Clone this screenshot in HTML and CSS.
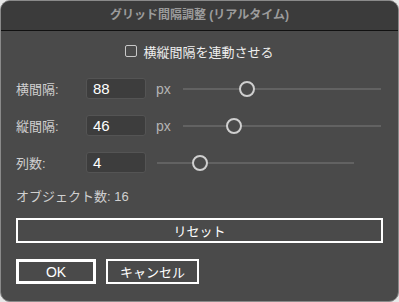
FILE: index.html
```html
<!DOCTYPE html>
<html>
<head>
    <link rel="stylesheet" href="styles.css">
</head>
<body>
    <div class="window">
        <div class="titlebar">グリッド間隔調整 (リアルタイム)</div>
        <div class="content">
            <label class="link-row">
                <span class="checkbox"></span>
                <span>横縦間隔を連動させる</span>
            </label>

            <div class="row">
                <span class="label">横間隔:</span>
                <div class="field">88</div>
                <span class="unit">px</span>
                <div class="slider wide"><span class="thumb" style="left: 32.3%"></span></div>
            </div>
            <div class="row">
                <span class="label">縦間隔:</span>
                <div class="field">46</div>
                <span class="unit">px</span>
                <div class="slider wide"><span class="thumb" style="left: 25.8%"></span></div>
            </div>
            <div class="row">
                <span class="label">列数:</span>
                <div class="field">4</div>
                <div class="slider short"><span class="thumb" style="left: 21.8%"></span></div>
            </div>

            <p class="count">オブジェクト数: 16</p>

            <button class="button reset">リセット</button>
            <div class="actions">
                <button class="button ok">OK</button>
                <button class="button cancel">キャンセル</button>
            </div>
        </div>
    </div>
</body>
</html>
```

FILE: styles.css
```css
body {
    margin: 0;
    background: #e8e8e8;
    font-family: "Liberation Sans", "Noto Sans CJK JP", sans-serif;
}
.window {
    width: 399px;
    height: 302px;
    box-sizing: border-box;
    border: 1px solid #8a8a8a;
    border-radius: 10px;
    background: #4a4a4a;
    overflow: hidden;
}
.titlebar {
    height: 29px;
    line-height: 29px;
    background: #3b3b3b;
    border-bottom: 1px solid #111;
    color: #9c9c9c;
    font-size: 12px;
    font-weight: bold;
    text-align: center;
}
.content {
    padding: 10px 15px 0 15px;
    display: flex;
    flex-direction: column;
}
.link-row {
    height: 20px;
    display: flex;
    align-items: center;
    justify-content: center;
    gap: 6px;
    color: #eeeeee;
    font-size: 13px;
}
.checkbox {
    width: 10px;
    height: 10px;
    border: 1px solid #c8c8c8;
    border-radius: 2px;
}
.row {
    height: 21px;
    margin-top: 16px;
    display: flex;
    align-items: center;
}
.link-row + .row { margin-top: 17px; }
.label {
    width: 70px;
    color: #cfcfcf;
    font-size: 13px;
}
.field {
    width: 52px;
    height: 19px;
    line-height: 20px;
    padding-left: 6px;
    background: #3d3d3d;
    border: 1px solid #545454;
    border-radius: 3px;
    color: #ffffff;
    font-size: 15px;
}
.unit {
    margin-left: 10px;
    width: 27px;
    color: #b4b4b4;
    font-size: 14px;
}
.slider {
    position: relative;
    height: 2px;
    background: #626262;
}
.slider.wide { width: 198px; }
.slider.short { width: 197px; margin-left: 11px; }
.thumb {
    position: absolute;
    top: -7px;
    width: 12px;
    height: 12px;
    margin-left: -8px;
    border: 2px solid #cfcfcf;
    border-radius: 50%;
    background: #4a4a4a;
}
.count {
    margin: 16px 0 0 0;
    height: 16px;
    line-height: 16px;
    color: #d0d0d0;
    font-size: 13px;
}
.button {
    font-family: inherit;
    background: #4a4a4a;
    color: #ffffff;
    border: 2px solid #ffffff;
    border-radius: 0;
    padding: 0;
    height: 25px;
    font-size: 13px;
}
.reset {
    margin-top: 13px;
    width: 367px;
}
.actions {
    margin-top: 16px;
    display: flex;
    gap: 10px;
}
.ok {
    width: 80px;
    border-width: 3px;
    font-size: 14px;
}
.cancel { width: 93px; }
```
